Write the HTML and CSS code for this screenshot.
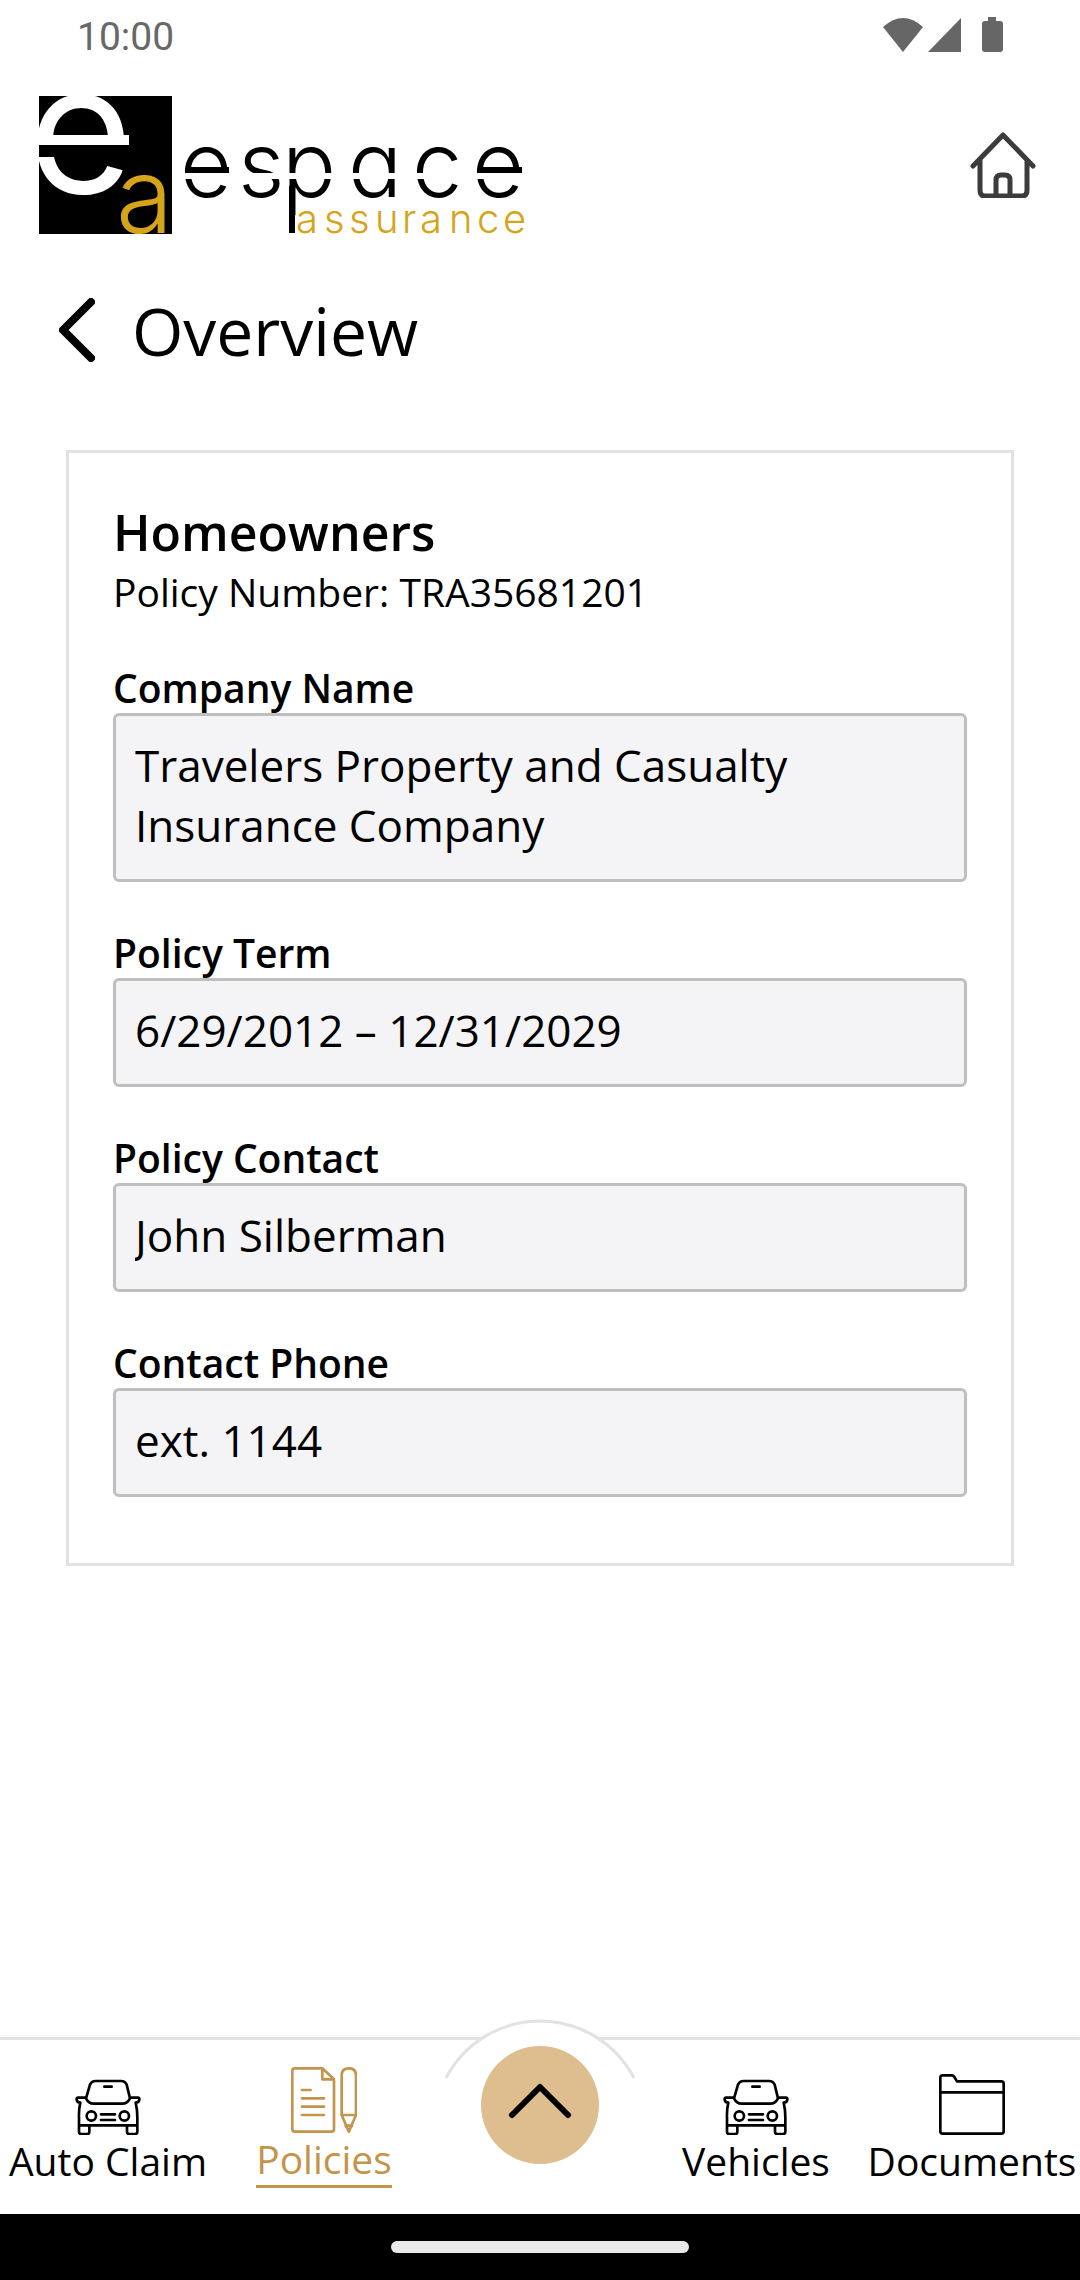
FILE: index.html
```html
<!DOCTYPE html>
<html lang="en">
<head>
<meta charset="utf-8">
<meta name="viewport" content="width=device-width, initial-scale=1">
<title>Overview – espace assurance</title>
<link rel="stylesheet" href="styles.css">
</head>
<body class="screen">
  <div class="status">
    <span class="status-time">10:00</span>
    <svg class="status-icons" viewBox="0 0 120 36" aria-hidden="true">
      <path d="M0 10Q20 -8 40 10L20 35Z"/>
      <path d="M45 35L78 1V35Z"/>
      <path d="M105 0h8v4h4q3 0 3 3v25q0 3-3 3h-15q-3 0-3-3V7q0-3 3-3h3Z"/>
    </svg>
  </div>

  <header class="header">
    <svg class="logo" viewBox="0 0 488 138" role="img" aria-label="espace assurance">
      <clipPath id="mark"><rect width="133" height="138"/></clipPath>
      <rect width="133" height="138"/>
      <g clip-path="url(#mark)">
        <text class="logo-e" x="-11" y="97">e</text>
        <rect class="logo-gap" x="2" y="39" width="88" height="10"/>
        <rect y="49" width="100" height="12"/>
        <text class="logo-a" x="77" y="137">a</text>
      </g>
      <text class="logo-name" y="101" x="141 199 243 309 373 433">espace</text>
      <rect x="148" y="71" width="42" height="6"/>
      <rect x="440" y="71" width="43" height="6"/>
      <rect x="250" y="90" width="6" height="47"/>
      <rect class="logo-gap" x="140" y="77" width="348" height="6"/>
      <text class="logo-sub" y="137" x="257 285 310 336 363 381 410 438 464">assurance</text>
    </svg>
    <a class="home" href="#" aria-label="Home">
      <svg class="icon home-icon" viewBox="0 0 66 66" aria-hidden="true">
        <path d="M3 34L33 3L63 34M10 28V58Q10 64 15 64H52Q57 64 57 58V28M26 64V48Q26 43 31 43H35Q40 43 40 48V64"/>
      </svg>
    </a>
  </header>

  <div class="title-row">
    <button class="back" type="button" aria-label="Back">
      <svg class="back-icon" viewBox="0 0 36 64" aria-hidden="true"><path d="M32 4L4 32L32 60"/></svg>
    </button>
    <h1 class="title">Overview</h1>
  </div>

  <main class="content">
    <section class="card">
      <h2 class="card-title">Homeowners</h2>
      <p class="card-sub">Policy Number: TRA35681201</p>
      <div class="field">
        <label class="label" for="company">Company Name</label>
        <textarea class="value" id="company" rows="2" readonly>Travelers Property and Casualty Insurance Company</textarea>
      </div>
      <div class="field">
        <label class="label" for="term">Policy Term</label>
        <input class="value" id="term" type="text" value="6/29/2012 – 12/31/2029" readonly>
      </div>
      <div class="field">
        <label class="label" for="contact">Policy Contact</label>
        <input class="value" id="contact" type="text" value="John Silberman" readonly>
      </div>
      <div class="field">
        <label class="label" for="phone">Contact Phone</label>
        <input class="value" id="phone" type="text" value="ext. 1144" readonly>
      </div>
    </section>
  </main>

  <nav class="nav">
    <a class="tab" href="#">
      <svg class="icon tab-icon" viewBox="0 0 198 198" aria-hidden="true">
        <path id="car" d="M33 88L45 47Q50 36 62 36H138Q150 36 155 47L165 88Q157 104 142 104H56Q41 104 33 88ZM33 86H10Q4 86 5 92Q6 101 16 101Q11 122 12 145V188Q12 195 19 195H37Q43 195 43 188V169M165 86H188Q194 86 193 92Q192 101 182 101Q187 122 187 145V188Q187 195 180 195H163Q156 195 156 188V169M12 169H187M88 53H110M78 136H120M78 153H120M35 141a14 14 0 1 0 28 0a14 14 0 1 0-28 0M134 141a14 14 0 1 0 28 0a14 14 0 1 0-28 0"/>
      </svg>
      <span class="tab-label">Auto Claim</span>
    </a>
    <a class="tab tab-active" href="#" aria-current="page">
      <svg class="icon tab-icon" viewBox="0 0 198 198" aria-hidden="true">
        <path d="M94 4H11Q4 4 4 11V187Q4 194 11 194H122Q129 194 129 187V37L94 4V37H129M33 69H59M33 94H99M33 119H99M33 144H99M152 144V25Q152 4 173.500 4Q195 4 195 25V144L173.500 194L152 144H195M164 176H183L173.500 190Z"/>
      </svg>
      <span class="tab-label">Policies</span>
    </a>
    <div class="more">
      <svg class="more-arc" viewBox="0 0 192 60" aria-hidden="true"><path d="M2 59A106 106 0 0 1 190 59"/></svg>
      <button class="more-button" type="button" aria-label="More">
        <svg class="more-icon" viewBox="0 0 118 118" aria-hidden="true"><path d="M31 69L59 41L87 69"/></svg>
      </button>
    </div>
    <a class="tab" href="#">
      <svg class="icon tab-icon" viewBox="0 0 198 198" aria-hidden="true"><use href="#car"/></svg>
      <span class="tab-label">Vehicles</span>
    </a>
    <a class="tab" href="#">
      <svg class="icon tab-icon" viewBox="0 0 198 198" aria-hidden="true">
        <path d="M4 187V26Q4 19 11 19H38Q43 19 46 24L54 37H187Q194 37 194 44V187Q194 194 187 194H11Q4 194 4 187ZM4 70H194"/>
      </svg>
      <span class="tab-label">Documents</span>
    </a>
  </nav>
  <div class="system-bar"><span class="handle"></span></div>
</body>
</html>
```
FILE: styles.css
```css
* {
  box-sizing: border-box;
}

.screen {
  margin: 0;
  min-height: 100vh;
  display: flex;
  flex-direction: column;
  background: #fff;
  color: #000;
  font-family: "Open Sans", sans-serif;
}

.status {
  display: flex;
  justify-content: space-between;
  align-items: flex-start;
  height: 96px;
  padding: 17px 77px 0;
}

.status-time {
  font: 39px/40px Roboto, sans-serif;
  color: #686868;
}

.status-icons {
  width: 120px;
  height: 36px;
  fill: #666;
}

.header {
  display: flex;
  justify-content: space-between;
  align-items: center;
  padding: 0 44px 0 39px;
}

.logo {
  width: 488px;
  height: 138px;
  font-family: Inter, sans-serif;
}

.logo-e {
  font-size: 180px;
  font-weight: 400;
  fill: #fff;
}

.logo-a {
  font-size: 104px;
  font-weight: 300;
  fill: #d6a419;
}

.logo-name {
  font-size: 90px;
  font-weight: 300;
  font-feature-settings: "cv11";
}

.logo-gap {
  fill: #fff;
}

.logo-sub {
  font-size: 40px;
  font-weight: 300;
  fill: #d6a419;
}

.home {
  display: flex;
}

.icon {
  width: 66px;
  height: 66px;
  fill: none;
  stroke: currentColor;
  stroke-linecap: round;
  stroke-linejoin: round;
}

.home-icon {
  color: #3c3c3c;
  stroke-width: 5px;
}

.title-row {
  display: flex;
  align-items: center;
  gap: 37px;
  padding: 51px 59px 75px;
}

.back {
  display: flex;
  padding: 0;
  border: 0;
  background: none;
}

.back-icon {
  width: 36px;
  height: 64px;
  fill: none;
  stroke: #000;
  stroke-width: 8px;
  stroke-linecap: round;
  stroke-linejoin: round;
}

.title {
  margin: 0;
  font-size: 66px;
  line-height: 90px;
  font-weight: 400;
}

.content {
  flex: 1;
  padding: 0 66px;
}

.card {
  padding: 44px 44px 66px;
  border: 3px solid #e2e2e2;
}

.card-title {
  margin: 0;
  font-size: 50px;
  line-height: 70px;
  font-weight: 600;
}

.card-sub {
  margin: 0;
  font-size: 39px;
  line-height: 50px;
}

.field {
  display: flex;
  flex-direction: column;
  margin-top: 46px;
}

.label {
  font-size: 39px;
  line-height: 50px;
  font-weight: 600;
}

.value {
  display: block;
  width: 100%;
  margin: 0;
  padding: 19px 19px 24px;
  border: 3px solid #bfbfbf;
  border-radius: 6px;
  background: #f4f4f7;
  color: #000;
  font: 44px/60px "Open Sans", sans-serif;
  resize: none;
  overflow: hidden;
  outline: 0;
}

input.value {
  height: 109px;
}

textarea.value {
  height: 169px;
}

.nav {
  display: grid;
  grid-template-columns: repeat(5, 1fr);
  height: 177px;
  border-top: 3px solid #e2e2e2;
  box-shadow: 0 -2px 6px rgba(0, 0, 0, 0.04);
}

.tab {
  display: flex;
  flex-direction: column;
  align-items: center;
  justify-content: center;
  padding-top: 2px;
  color: #000;
  text-decoration: none;
}

.tab-icon {
  stroke-width: 8px;
}

.tab-label {
  font-size: 39px;
  line-height: 52px;
  white-space: nowrap;
}

.tab-active {
  padding-top: 0;
  color: #c3944b;
}

.tab-active .tab-label {
  border-bottom: 3px solid currentColor;
}

.more {
  position: relative;
  display: flex;
  justify-content: center;
  align-items: flex-start;
  padding-top: 6px;
}

.more-arc {
  position: absolute;
  top: -21px;
  width: 192px;
  height: 60px;
  overflow: visible;
  fill: #fff;
  stroke: #e2e2e2;
  stroke-width: 3px;
}

.more-button {
  position: relative;
  display: flex;
  padding: 0;
  border: 0;
  border-radius: 50%;
  background: #debd8e;
}

.more-icon {
  width: 118px;
  height: 118px;
  fill: none;
  stroke: #000;
  stroke-width: 6px;
  stroke-linecap: round;
  stroke-linejoin: round;
}

.system-bar {
  display: flex;
  justify-content: center;
  align-items: center;
  height: 66px;
  background: #000;
}

.handle {
  width: 298px;
  height: 12px;
  border-radius: 6px;
  background: #e9e9e9;
}
```
